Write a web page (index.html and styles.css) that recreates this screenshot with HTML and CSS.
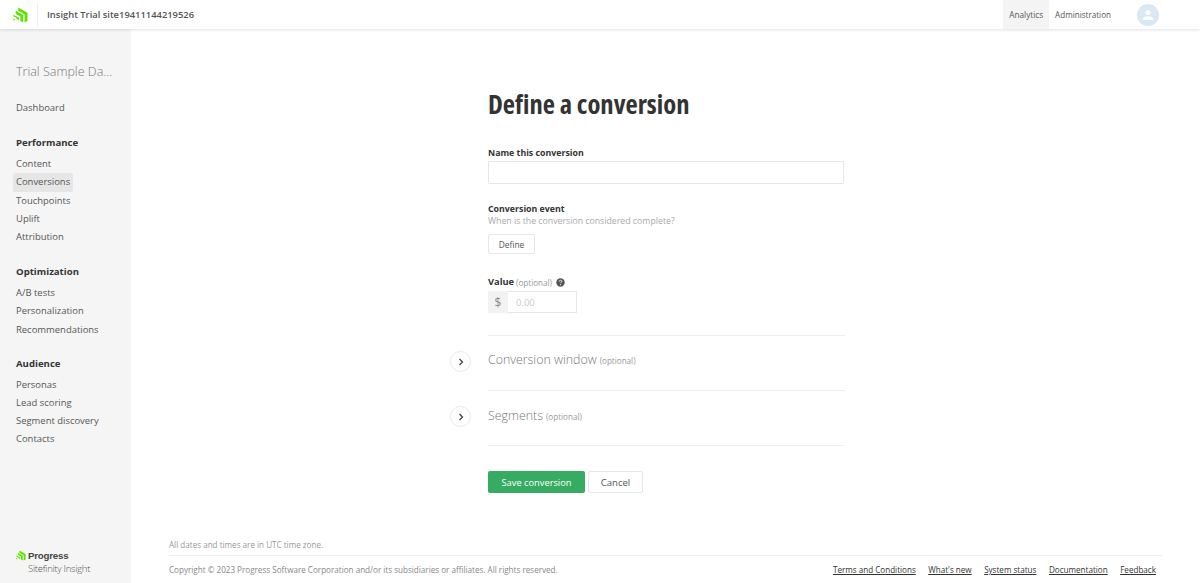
FILE: index.html
```html
<!DOCTYPE html>
<html lang="en">
<head>
<meta charset="utf-8">
<title>Define a conversion</title>
<link rel="stylesheet" href="styles.css">
</head>
<body>
<header class="topbar">
  <div class="logo-cell">
    <svg class="logo" width="15" height="16" viewBox="0 0 16 16"><path fill="#5ce500" d="M5.6 0 15.4 5.6V14.4L12.3 16V7.4L5.6 3.5ZM2.9 3.4 10.8 8V16L7.9 14.4V9.7L2.9 6.8ZM0.4 7.6 6.4 11V13.6L3.6 12V11L0.4 9.4ZM0.4 11.6 2.6 12.8 0.4 14.2Z"/></svg>
  </div>
  <div class="site-name">Insight Trial site19411144219526</div>
  <nav class="topnav">
    <a class="topnav-item active">Analytics</a>
    <a class="topnav-item admin">Administration</a>
  </nav>
  <div class="avatar">
    <svg width="12" height="12" viewBox="0 0 12 12"><circle cx="6" cy="3.4" r="2.5" fill="#fff"/><path fill="#fff" d="M1 11V9.6C1 8 3.4 7.2 6 7.2s5 .8 5 2.4V11Z"/></svg>
  </div>
</header>
<div class="shell">
  <aside class="sidebar">
    <div class="side-title">Trial Sample Da...</div>
    <a class="side-link solo">Dashboard</a>
    <div class="side-group">
      <h3 class="side-head">Performance</h3>
      <a class="side-link">Content</a>
      <a class="side-link current">Conversions</a>
      <a class="side-link">Touchpoints</a>
      <a class="side-link">Uplift</a>
      <a class="side-link">Attribution</a>
    </div>
    <div class="side-group">
      <h3 class="side-head">Optimization</h3>
      <a class="side-link">A/B tests</a>
      <a class="side-link">Personalization</a>
      <a class="side-link">Recommendations</a>
    </div>
    <div class="side-group last">
      <h3 class="side-head">Audience</h3>
      <a class="side-link">Personas</a>
      <a class="side-link">Lead scoring</a>
      <a class="side-link">Segment discovery</a>
      <a class="side-link">Contacts</a>
    </div>
    <div class="brand">
      <div class="brand-top">
        <svg width="10" height="11" viewBox="0 0 16 16"><path fill="#5ce500" d="M5.6 0 15.4 5.6V14.4L12.3 16V7.4L5.6 3.5ZM2.9 3.4 10.8 8V16L7.9 14.4V9.7L2.9 6.8ZM0.4 7.6 6.4 11V13.6L3.6 12V11L0.4 9.4ZM0.4 11.6 2.6 12.8 0.4 14.2Z"/></svg>
        <span class="brand-name">Progress</span>
      </div>
      <div class="brand-sub">Sitefinity Insight</div>
    </div>
  </aside>
  <main class="main">
    <form class="form">
      <h1 class="title">Define a conversion</h1>
      <label class="label name-label">Name this conversion</label>
      <div class="text-input"></div>
      <div class="label event-label">Conversion event</div>
      <div class="help">When is the conversion considered complete?</div>
      <button type="button" class="btn-define">Define</button>
      <div class="value-row">
        <span class="label value-label">Value</span>
        <span class="opt">(optional)</span>
        <svg class="q" width="9" height="9" viewBox="0 0 9 9"><circle cx="4.5" cy="4.5" r="4.2" fill="#555"/><path d="M3.1 3.5C3.2 2.7 3.8 2.3 4.5 2.3c.8 0 1.4.5 1.4 1.1 0 .9-1.3.9-1.3 1.7" fill="none" stroke="#fff" stroke-width=".9"/><circle cx="4.55" cy="6.6" r=".55" fill="#fff"/></svg>
      </div>
      <div class="money">
        <span class="money-sign">$</span>
        <span class="money-value">0.00</span>
      </div>
      <div class="section first">
        <span class="circle"><svg width="6" height="8" viewBox="0 0 6 8"><path d="M1.5 1 4.5 4 1.5 7" fill="none" stroke="#444" stroke-width="1.3"/></svg></span>
        <span class="section-name">Conversion window</span>
        <span class="opt">(optional)</span>
      </div>
      <div class="section">
        <span class="circle"><svg width="6" height="8" viewBox="0 0 6 8"><path d="M1.5 1 4.5 4 1.5 7" fill="none" stroke="#444" stroke-width="1.3"/></svg></span>
        <span class="section-name">Segments</span>
        <span class="opt">(optional)</span>
      </div>
      <div class="actions">
        <button type="button" class="btn-save">Save conversion</button>
        <button type="button" class="btn-cancel">Cancel</button>
      </div>
    </form>
    <footer class="footer">
      <div class="tz">All dates and times are in UTC time zone.</div>
      <div class="foot-row">
        <span class="copy">Copyright © 2023 Progress Software Corporation and/or its subsidiaries or affiliates. All rights reserved.</span>
        <nav class="foot-links">
          <a>Terms and Conditions</a>
          <a>What's new</a>
          <a>System status</a>
          <a>Documentation</a>
          <a>Feedback</a>
        </nav>
      </div>
    </footer>
  </main>
</div>
</body>
</html>
```
FILE: styles.css
```css
* { box-sizing: border-box; }
html, body { margin: 0; height: 100%; }
body {
  font-family: "Open Sans", "Liberation Sans", sans-serif;
  font-size: 9.45px;
  color: #333;
  background: #fff;
  display: flex;
  flex-direction: column;
  height: 583px;
  overflow: hidden;
}
.topbar {
  height: 29px;
  flex: none;
  display: flex;
  align-items: center;
  background: #fff;
  box-shadow: 0 1px 3px rgba(0, 0, 0, .12);
  position: relative;
}
.logo-cell {
  width: 38px;
  height: 22px;
  display: flex;
  align-items: center;
  padding-left: 13px;
  border-right: 1px solid #eee;
}
.site-name {
  margin-left: 9px;
  font-size: 9.4px;
  font-weight: 600;
  color: #555;
  flex: 1;
}
.topnav { display: flex; height: 100%; }
.topnav-item {
  display: flex;
  align-items: center;
  padding: 0 6px;
  font-size: 8.2px;
  color: #555;
}
.topnav-item.admin { font-size: 8.1px; }
.topnav-item.active { background: #f4f4f4; }
.avatar {
  width: 22px;
  height: 22px;
  border-radius: 50%;
  background: #d9e8f5;
  margin: 0 41px 0 20px;
  display: flex;
  align-items: center;
  justify-content: center;
}
.shell { flex: 1; display: flex; min-height: 0; }
.sidebar {
  width: 131px;
  flex: none;
  background: #f5f5f5;
  padding: 35px 0 0 16px;
  display: flex;
  flex-direction: column;
  align-items: flex-start;
}
.side-title {
  font-size: 12.5px;
  font-weight: 300;
  line-height: 16px;
  color: #777;
  margin-bottom: 19px;
}
.side-link {
  display: block;
  line-height: 18.2px;
  height: 18.2px;
  font-size: 9.45px;
  color: #555;
  padding: 0 3px;
  margin-left: -3px;
  border-radius: 2px;
}
.side-link.current { background: #e6e6e6; }
.side-group { margin-top: 17px; display: flex; flex-direction: column; align-items: flex-start; }
.side-head {
  margin: 0 0 3px;
  font-size: 9.6px;
  font-weight: 700;
  line-height: 18px;
  color: #333;
}
.side-group.last { margin-top: 16px; }
.brand { margin-top: auto; padding-bottom: 8px; }
.brand-top { display: flex; align-items: center; gap: 2px; height: 13px; margin-top: 1px; }
.brand-name { font-family: "Liberation Sans", sans-serif; font-size: 9.7px; font-weight: 700; color: #444; letter-spacing: -.2px; }
.brand-sub { margin: 0 0 0 12px; font-size: 9.6px; font-weight: 300; letter-spacing: -.3px; color: #555; line-height: 13px; }
.main {
  flex: 1;
  display: flex;
  flex-direction: column;
  min-width: 0;
  padding: 0 38px;
}
.form {
  width: 356px;
  margin-left: 319px;
  flex: 1;
  display: flex;
  flex-direction: column;
  align-items: flex-start;
}
.title {
  margin: 56px 0 0;
  font-size: 26.6px;
  line-height: 38px;
  font-weight: 700;
  font-stretch: 75%;
  color: #333;
  white-space: nowrap;
}
.label { font-size: 8.8px; font-weight: 700; color: #333; line-height: 14px; }
.name-label { margin-top: 23px; display: block; }
.text-input {
  margin-top: 1px;
  width: 356px;
  height: 23px;
  border: 1px solid #e6e6e6;
  border-radius: 1px;
}
.event-label { margin-top: 18px; }
.help { font-size: 8.75px; line-height: 12px; color: #aaa; margin-top: -1px; }
button { font-family: inherit; cursor: pointer; }
.btn-define {
  margin-top: 7px;
  width: 47px;
  height: 20px;
  padding: 0;
  font-size: 8.4px;
  color: #555;
  background: #fff;
  border: 1px solid #e6e6e6;
  border-radius: 2px;
}
.value-row { display: flex; align-items: center; margin-top: 21px; height: 14px; gap: 2px; }
.value-label { font-size: 9.3px; }
.opt { font-size: 8.1px; color: #999; }
.q { margin-left: 2px; }
.money {
  margin-top: 2px;
  width: 89px;
  height: 22px;
  border: 1px solid #e6e6e6;
  display: flex;
  align-items: stretch;
}
.money-sign {
  width: 20px;
  margin: -1px 0 -1px -1px;
  background: #f2f2f2;
  color: #888;
  font-size: 12px;
  display: flex;
  align-items: center;
  justify-content: center;
}
.money-value { padding-left: 8px; color: #ccc; font-size: 9.5px; display: flex; align-items: center; }
.section {
  width: 357px;
  height: 55px;
  padding-top: 14px;
  display: flex;
  align-items: baseline;
  gap: 3px;
  border-bottom: 1px solid #eee;
  position: relative;
}
.section.first { margin-top: 22px; border-top: 1px solid #eee; height: 56px; padding-top: 13px; }
.section-name { font-size: 12.4px; font-weight: 300; color: #777; line-height: 22px; }
.circle {
  position: absolute;
  left: -38px;
  top: 15px;
  width: 21px;
  height: 21px;
  border: 1px solid #e8e8e8;
  border-radius: 50%;
  background: #fff;
  display: flex;
  align-items: center;
  justify-content: center;
}
.actions { display: flex; gap: 3px; margin-top: 25px; }
.btn-save {
  width: 97px;
  height: 22px;
  padding: 0;
  font-size: 9.3px;
  color: #fff;
  background: #36ab62;
  border: 0;
  border-radius: 2px;
}
.btn-cancel {
  width: 55px;
  height: 22px;
  padding: 0;
  font-size: 9.5px;
  color: #555;
  background: #fff;
  border: 1px solid #e6e6e6;
  border-radius: 2px;
}
.footer { flex: none; }
.tz { font-size: 8.1px; color: #999; line-height: 12px; padding-bottom: 4px; border-bottom: 1px solid #eee; }
.foot-row { display: flex; justify-content: space-between; align-items: center; height: 27px; padding-right: 6px; }
.copy { font-size: 8.1px; color: #888; }
.foot-links { display: flex; gap: 12.5px; }
.foot-links a { font-size: 8.1px; color: #333; text-decoration: underline; }
```
